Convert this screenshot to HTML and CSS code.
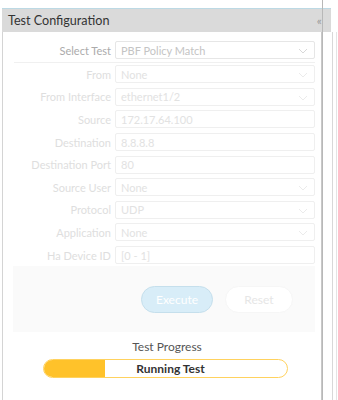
FILE: index.html
```html
<!DOCTYPE html>
<html>
<head>
<meta charset="utf-8">
<link rel="stylesheet" href="styles.css">
</head>
<body>
<div class="page">
  <div class="panel">
    <div class="topline"></div>
    <div class="header">
      <span class="title">Test Configuration</span>
      <span class="collapse">&laquo;</span>
    </div>
    <div class="body">
      <div class="form">
        <div class="row first"><label class="lbl strong">Select Test</label><div class="field strong sel">PBF Policy Match<svg class="chev" viewBox="0 0 10 6" width="10" height="6"><path d="M1 1 L5 5 L9 1" fill="none" stroke="#d8d8d8" stroke-width="1"/></svg></div></div>
        <div class="sep"></div>
        <div class="row"><label class="lbl">From</label><div class="field sel">None<svg class="chev" viewBox="0 0 10 6" width="10" height="6"><path d="M1 1 L5 5 L9 1" fill="none" stroke="#ebebeb" stroke-width="1"/></svg></div></div>
        <div class="row"><label class="lbl">From Interface</label><div class="field sel">ethernet1/2<svg class="chev" viewBox="0 0 10 6" width="10" height="6"><path d="M1 1 L5 5 L9 1" fill="none" stroke="#ebebeb" stroke-width="1"/></svg></div></div>
        <div class="row"><label class="lbl">Source</label><div class="field">172.17.64.100</div></div>
        <div class="row"><label class="lbl">Destination</label><div class="field">8.8.8.8</div></div>
        <div class="row"><label class="lbl">Destination Port</label><div class="field">80</div></div>
        <div class="row"><label class="lbl">Source User</label><div class="field sel">None<svg class="chev" viewBox="0 0 10 6" width="10" height="6"><path d="M1 1 L5 5 L9 1" fill="none" stroke="#ebebeb" stroke-width="1"/></svg></div></div>
        <div class="row"><label class="lbl">Protocol</label><div class="field sel">UDP<svg class="chev" viewBox="0 0 10 6" width="10" height="6"><path d="M1 1 L5 5 L9 1" fill="none" stroke="#ebebeb" stroke-width="1"/></svg></div></div>
        <div class="row"><label class="lbl">Application</label><div class="field sel">None<svg class="chev" viewBox="0 0 10 6" width="10" height="6"><path d="M1 1 L5 5 L9 1" fill="none" stroke="#ebebeb" stroke-width="1"/></svg></div></div>
        <div class="row"><label class="lbl">Ha Device ID</label><div class="field">[0 - 1]</div></div>
      </div>
      <div class="actions">
        <button class="btn exec">Execute</button>
        <button class="btn reset">Reset</button>
      </div>
      <div class="progress">
        <div class="ptitle">Test Progress</div>
        <div class="bar"><div class="fill" style="width:61px"></div><span class="btext">Running Test</span></div>
      </div>
    </div>
  </div>
  <div class="side"></div>
  <div class="splitter"></div>
</div>
</body>
</html>
```
FILE: styles.css
```css
html, body { margin: 0; padding: 0; background: #fff; }
body { font-family: Lato, "Open Sans", sans-serif; width: 338px; height: 400px; overflow: hidden; }
.page { position: relative; display: flex; height: 400px; padding-top: 8px; box-sizing: border-box; }
.panel { width: 329px; margin-left: 2px; display: flex; flex-direction: column; }
.topline { height: 1px; background: #bcd9e4; }
.header { height: 23px; background: #dadada; display: flex; align-items: center; justify-content: space-between; padding: 0 9px 0 6px; }
.title { font-size: 12.6px; color: #333; }
.collapse { font-size: 12px; color: #9a9a9a; line-height: 1; }
.body { flex: 1; width: 320px; border-left: 1px solid #d4d4d4; border-right: 1px solid #c8c8c8; box-sizing: border-box; padding: 7px 0 0 9px; }
.form { width: 303px; }
.row { display: flex; align-items: center; height: 22.6px; }
.row .lbl { width: 99px; text-align: right; font-size: 11px; color: #dedede; padding-right: 4px; }
.row .lbl.strong { color: #ababab; }
.field { width: 200px; height: 18px; box-sizing: border-box; border: 1px solid #efefef; border-radius: 2px; font-size: 11px; color: #e2e2e2; padding-left: 5px; display: flex; align-items: center; position: relative; }
.field.strong { color: #c4c4c4; border-color: #e6e6e6; }
.chev { position: absolute; right: 6px; top: 6px; }
.sep { height: 1px; background: #f0f0f0; margin: 1px 0 0 2px; }
.row.first { height: 22px; }
.actions { width: 302px; height: 66px; margin-left: 1px; background: #fafafa; display: flex; align-items: center; justify-content: flex-end; gap: 12px; padding-right: 22px; box-sizing: border-box; }
.btn { font-family: Lato, sans-serif; font-size: 12px; height: 27px; border-radius: 14px; padding: 0; }
.exec { width: 72px; background: #d8edf8; border: 1px solid #c5dfec; color: #fff; }
.reset { width: 68px; background: #fff; border: 1px solid #f6f6f6; color: #e6e6e6; }
.progress { display: flex; flex-direction: column; align-items: center; padding-top: 7px; width: 310px; }
.ptitle { font-size: 12px; color: #555; height: 20px; }
.bar { position: relative; width: 245px; height: 19px; box-sizing: border-box; border: 1px solid #ffd25e; border-radius: 10px; overflow: hidden; display: flex; align-items: center; justify-content: center; margin-left: -3px; }
.fill { position: absolute; left: 0; top: 0; bottom: 0; background: #ffc22a; }
.btext { position: relative; font-size: 12px; font-weight: bold; color: #333; margin-left: 10px; }
.side { width: 3px; margin-left: 1px; margin-top: 24px; border-left: 1px solid #d8d8d8; border-right: 1px solid #e4e4e4; }
.splitter { position: absolute; left: 322px; top: 0; width: 1px; height: 400px; background: #b8b8b8; }
```
